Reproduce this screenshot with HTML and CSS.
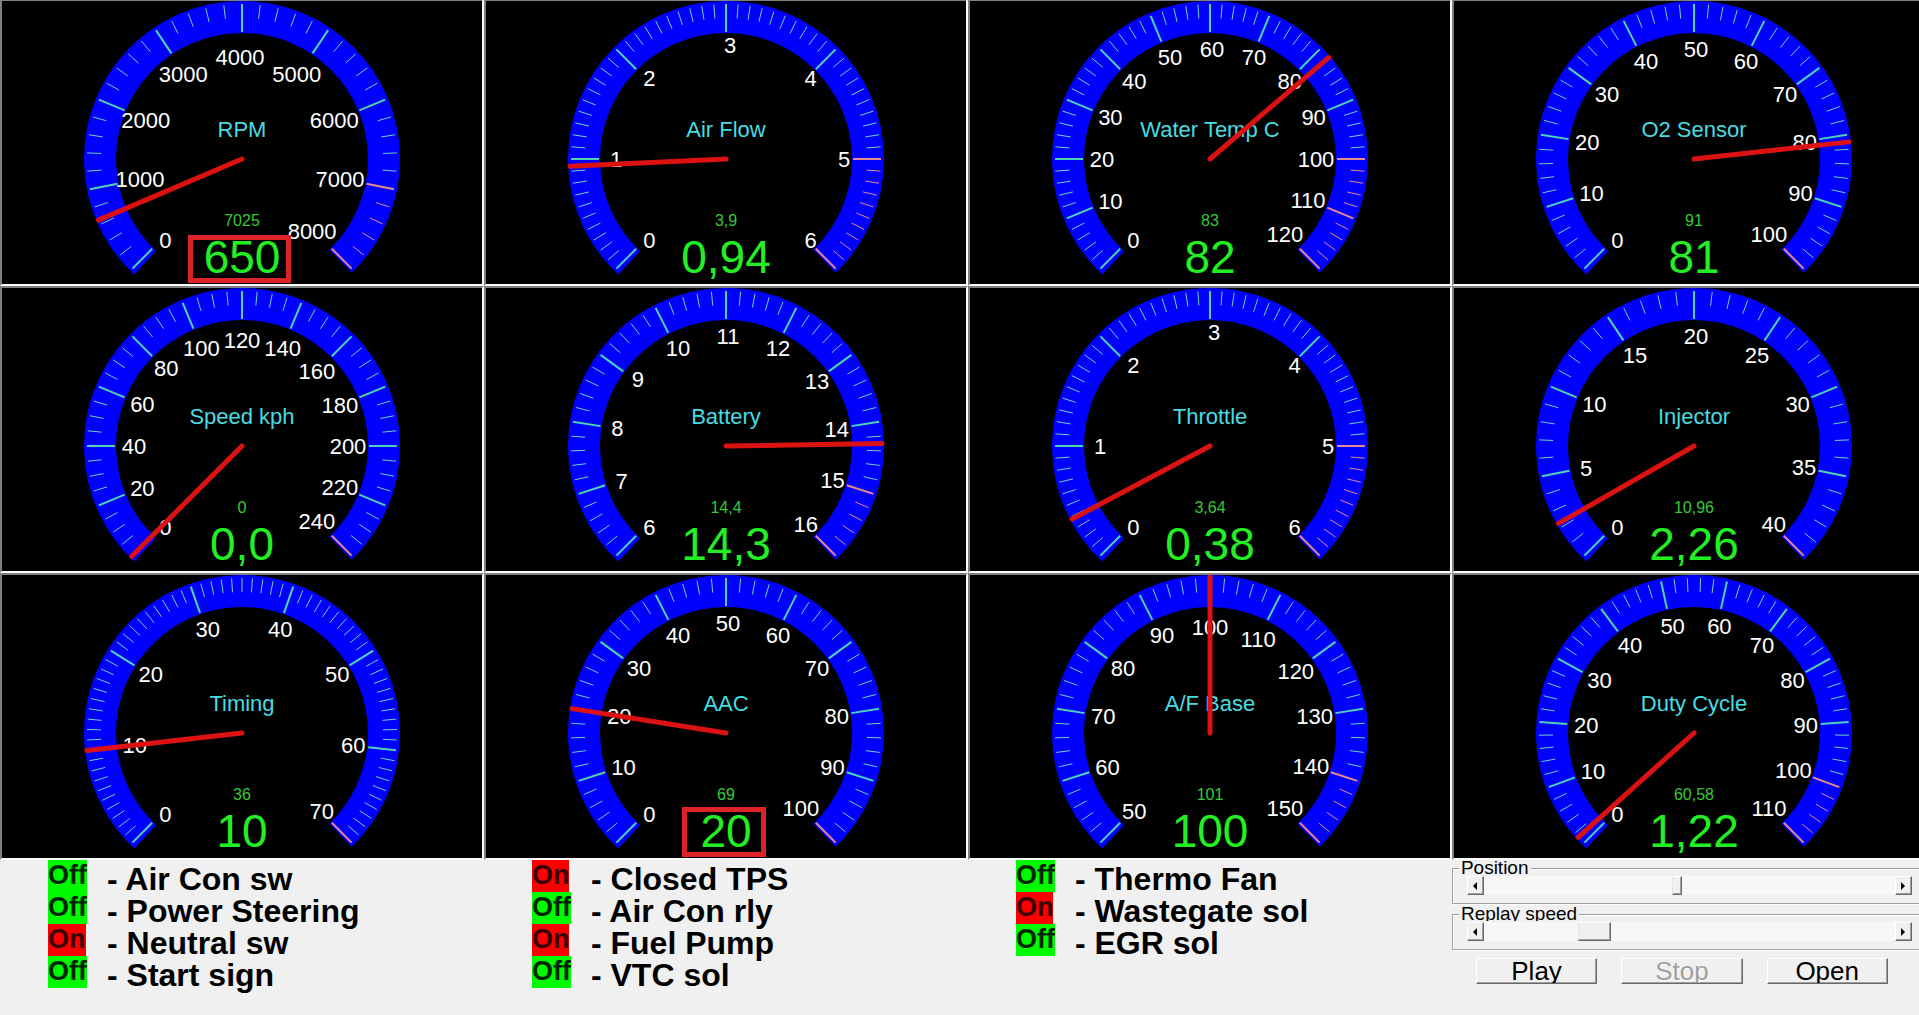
FILE: index.html
```html
<!DOCTYPE html>
<html lang="en">
<head>
  <meta charset="utf-8">
  <meta name="viewport" content="width=device-width, initial-scale=1">
  <title>Engine Monitor</title>
  <link rel="stylesheet" href="styles.css">
</head>
<body>
  <main class="gauges" id="gauges"></main>

  <section class="status">
    <ul class="flags">
      <li><span class="flag off">Off</span><span class="name">- Air Con sw</span></li>
      <li><span class="flag off">Off</span><span class="name">- Power Steering</span></li>
      <li><span class="flag on">On</span><span class="name">- Neutral sw</span></li>
      <li><span class="flag off">Off</span><span class="name">- Start sign</span></li>
    </ul>
    <ul class="flags">
      <li><span class="flag on">On</span><span class="name">- Closed TPS</span></li>
      <li><span class="flag off">Off</span><span class="name">- Air Con rly</span></li>
      <li><span class="flag on">On</span><span class="name">- Fuel Pump</span></li>
      <li><span class="flag off">Off</span><span class="name">- VTC sol</span></li>
    </ul>
    <ul class="flags">
      <li><span class="flag off">Off</span><span class="name">- Thermo Fan</span></li>
      <li><span class="flag on">On</span><span class="name">- Wastegate sol</span></li>
      <li><span class="flag off">Off</span><span class="name">- EGR sol</span></li>
    </ul>

    <div class="player">
      <fieldset class="group">
        <legend><label for="position">Position</label></legend>
        <div class="scrollbar">
          <button class="arrow" type="button" aria-label="Step back"><svg width="4" height="8" viewBox="0 0 4 8"><path d="M4 0v8L0 4z"/></svg></button>
          <input class="slider narrow" id="position" type="range" min="0" max="100" value="47">
          <button class="arrow" type="button" aria-label="Step forward"><svg width="4" height="8" viewBox="0 0 4 8"><path d="M0 0v8l4-4z"/></svg></button>
        </div>
      </fieldset>
      <fieldset class="group">
        <legend><label for="speed">Replay speed</label></legend>
        <div class="scrollbar">
          <button class="arrow" type="button" aria-label="Slower"><svg width="4" height="8" viewBox="0 0 4 8"><path d="M4 0v8L0 4z"/></svg></button>
          <input class="slider" id="speed" type="range" min="0" max="100" value="25">
          <button class="arrow" type="button" aria-label="Faster"><svg width="4" height="8" viewBox="0 0 4 8"><path d="M0 0v8l4-4z"/></svg></button>
        </div>
      </fieldset>
      <div class="actions">
        <button class="action" type="button">Play</button>
        <button class="action" type="button" disabled>Stop</button>
        <button class="action" type="button">Open</button>
      </div>
    </div>
  </section>

  <script src="gauges.js"></script>
</body>
</html>
```
FILE: styles.css
```css
* {
  box-sizing: border-box;
}

body {
  margin: 0;
  min-height: 100vh;
  overflow: hidden;
  background: #f0f0f0;
  color: #000;
  font-family: "Liberation Sans", Arial, sans-serif;
}

/* Both bands share the same columns; the last one runs past the window edge. */
.gauges,
.status {
  display: grid;
  grid-template-columns: repeat(4, 25.22%);
}

.gauges {
  margin-top: -1px;
}

.cell {
  display: flex;
  justify-content: center;
  background: #000;
  border: 2px solid;
  border-color: #808080 #fff #fff #808080;
}

.dial {
  display: block;
  max-width: 100%;
}

.ring {
  fill: none;
  stroke: #0000fe;
  stroke-width: 32;
}

.major {
  stroke: #4cd4b4;
  stroke-width: 2;
}

.minor {
  stroke: #70d4bc;
  stroke-width: 1;
}

.major.warn,
.minor.warn {
  stroke: #e88890;
}

.dial text {
  text-anchor: middle;
  font-size: 22px;
}

.dial .number {
  fill: #fff;
}

.dial .title {
  fill: #48dce0;
}

.dial .peak {
  fill: #38c838;
  font-size: 16px;
}

.dial .value {
  fill: #22f022;
  font-size: 46px;
}

.needle {
  stroke: #dc1212;
  stroke-width: 5;
  stroke-linecap: round;
}

.mark {
  fill: none;
  stroke: #dc2428;
  stroke-width: 5;
}

.flags {
  margin: 0;
  padding: 0 0 0 48px;
  list-style: none;
  font-weight: bold;
}

.flags li {
  display: grid;
  grid-template-columns: 59px 1fr;
  align-items: start;
  justify-items: start;
  height: 32px;
}

.flag {
  padding-bottom: 2px;
  font-size: 27px;
  line-height: 30px;
}

.flag.off {
  background: #00fb00;
  color: #002400;
}

.flag.on {
  background: #fb0000;
  color: #380000;
}

.name {
  font-size: 32px;
  line-height: 38px;
  white-space: nowrap;
}

.player {
  display: flex;
  flex-direction: column;
  gap: 3px;
  padding-top: 1px;
}

.group {
  min-width: 0;
  margin: 0;
  padding: 1px 23px 8px 14px;
  border: 1px solid #a0a0a0;
  box-shadow: 1px 1px #fff, inset 1px 1px #fff;
}

.group legend {
  height: 14px;
  margin-left: -8px;
  padding: 0 2px;
  overflow: hidden;
  background: #f0f0f0;
  font-size: 19px;
  line-height: 14px;
}

.scrollbar {
  display: flex;
  height: 19px;
}

.arrow,
.action {
  padding: 0;
  background: #f0f0f0;
  border: 1px solid;
  border-color: #fff #696969 #696969 #fff;
  box-shadow: inset -1px -1px #a0a0a0;
}

.arrow {
  display: grid;
  place-items: center;
  width: 17px;
}

.slider {
  flex: 1;
  min-width: 0;
  height: 19px;
  margin: 0;
  appearance: none;
  background: #f7f7f7;
}

.slider::-webkit-slider-thumb {
  appearance: none;
  width: 33px;
  height: 19px;
  background: #f0f0f0;
  border: 1px solid;
  border-color: #fff #696969 #696969 #e3e3e3;
  box-shadow: inset -1px -1px #a0a0a0;
}

.slider.narrow::-webkit-slider-thumb {
  width: 10px;
}

.actions {
  display: grid;
  grid-template-columns: repeat(3, 1fr);
  gap: 24px;
  padding: 5px 48px 0 24px;
}

.action {
  height: 26px;
  padding: 1px;
  overflow: hidden;
  color: #000;
  font: 26px/23px "Liberation Sans", Arial, sans-serif;
}

.action:disabled {
  color: #a0a0a0;
  text-shadow: 1px 1px #fff;
}
```
FILE: gauges.js
```js
// Each dial sweeps 270 degrees, from lower left to lower right.
const SWEEP = 270;
const CX = 160;
const CY = 158;

const gauges = [
  { title: "RPM", min: 0, max: 8000, step: 1000, parts: 5, warn: 7000, peak: "7025", value: "650", mark: [-51.5, 78.5, 98, 43] },
  { title: "Air Flow", min: 0, max: 6, step: 1, parts: 10, warn: 5, peak: "3,9", value: "0,94" },
  { title: "Water Temp C", min: 0, max: 120, step: 10, parts: 5, warn: 100, peak: "83", value: "82" },
  { title: "O2 Sensor", min: 0, max: 100, step: 10, parts: 5, warn: 100, peak: "91", value: "81" },
  { title: "Speed kph", min: 0, max: 240, step: 20, parts: 4, warn: 240, peak: "0", value: "0,0" },
  { title: "Battery", min: 6, max: 16, step: 1, parts: 5, warn: 15, peak: "14,4", value: "14,3" },
  { title: "Throttle", min: 0, max: 6, step: 1, parts: 10, warn: 5, peak: "3,64", value: "0,38" },
  { title: "Injector", min: 0, max: 40, step: 5, parts: 5, warn: 40, peak: "10,96", value: "2,26" },
  { title: "Timing", min: 0, max: 70, step: 10, parts: 10, warn: 70, peak: "36", value: "10" },
  { title: "AAC", min: 0, max: 100, step: 10, parts: 5, warn: 100, peak: "69", value: "20", mark: [-41.5, 76.5, 79, 45] },
  { title: "A/F Base", min: 50, max: 150, step: 10, parts: 5, warn: 140, peak: "101", value: "100" },
  { title: "Duty Cycle", min: 0, max: 110, step: 10, parts: 5, warn: 100, peak: "60,58", value: "1,22" }
];

// Point at a radius, for an angle measured from the start of the scale.
function point(angle, radius) {
  const a = (angle + 45) * Math.PI / 180;
  return [CX - radius * Math.sin(a), CY + radius * Math.cos(a)];
}

function line(angle, from, to, cls) {
  const [x1, y1] = from ? point(angle, from) : [CX, CY];
  const [x2, y2] = point(angle, to);
  return `<line class="${cls}" x1="${x1}" y1="${y1}" x2="${x2}" y2="${y2}"/>`;
}

function text(x, y, cls, content) {
  return `<text class="${cls}" x="${x}" y="${y}">${content}</text>`;
}

function dial(g) {
  const start = point(-2, 142);
  const end = point(SWEEP + 1, 142);
  const steps = Math.round((g.max - g.min) / g.step);
  const total = steps * g.parts;
  let out = `<path class="ring" d="M${start} A142 142 0 1 1 ${end}"/>`;

  for (let i = 0; i <= total; i++) {
    const angle = i * SWEEP / total;
    const warn = g.min + i * g.step / g.parts >= g.warn ? " warn" : "";
    out += i % g.parts === 0
      ? line(angle, 127, 155, "major" + warn)
      : line(angle, 141, 155, "minor" + warn);
  }

  // Longer numbers sit closer to the hub.
  for (let i = 0; i <= steps; i++) {
    const label = String(g.min + i * g.step);
    const [x, y] = point(i * SWEEP / steps, 118 - 4 * label.length);
    out += text(x + 6 - 2 * label.length, y + 8, "number", label);
  }

  out += text(CX, CY - 22, "title", g.title);
  out += text(CX, CY + 67, "peak", g.peak);
  out += text(CX, CY + 114, "value", g.value);

  const reading = parseFloat(g.value.replace(",", "."));
  out += line((reading - g.min) / (g.max - g.min) * SWEEP, 0, 156, "needle");

  if (g.mark) {
    const [x, y, w, h] = g.mark;
    out += `<rect class="mark" x="${CX + x}" y="${CY + y}" width="${w}" height="${h}"/>`;
  }
  return `<div class="cell"><svg class="dial" width="320" height="283" viewBox="0 0 320 283" role="img" aria-label="${g.title}">${out}</svg></div>`;
}

document.getElementById("gauges").innerHTML = gauges.map(dial).join("");
```
